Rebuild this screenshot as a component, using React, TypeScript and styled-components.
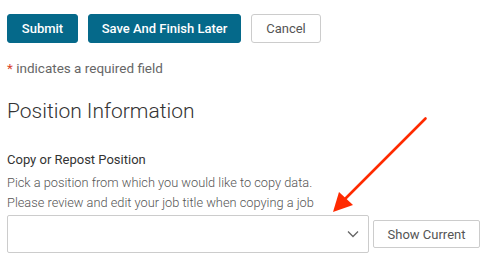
import React from "react";
import styled, { createGlobalStyle } from "styled-components";

const GlobalStyle = createGlobalStyle`
  html, body {
    margin: 0;
    padding: 0;
    background: #fff;
  }
  body {
    font-family: Roboto, "Liberation Sans", sans-serif;
    color: #333;
  }
`;

const Page = styled.div`
  position: relative;
  width: 500px;
  height: 274px;
  overflow: hidden;
  padding: 14px 0 0 7px;
  box-sizing: border-box;
`;

const Toolbar = styled.div`
  display: flex;
  gap: 10px;
`;

const Button = styled.button<{ $primary?: boolean; $width: number }>`
  height: 29px;
  width: ${(p) => p.$width}px;
  border-radius: 3px;
  font-family: Roboto, "Liberation Sans", sans-serif;
  font-size: 13px;
  font-weight: ${(p) => (p.$primary ? 500 : 400)};
  padding: 0;
  cursor: pointer;
  background: ${(p) => (p.$primary ? "#05698a" : "#fff")};
  color: ${(p) => (p.$primary ? "#fff" : "#555")};
  border: 1px solid ${(p) => (p.$primary ? "#05698a" : "#ccc")};
`;

const Required = styled.p`
  margin: 15px 0 0;
  font-size: 13.5px;
  line-height: 20px;
  color: #666;

  span {
    color: #d9432b;
  }
`;

const Heading = styled.h2`
  margin: 18px 0 0;
  font-size: 21px;
  font-weight: 300;
  line-height: 30px;
  color: #333;
`;

const Label = styled.div`
  margin-top: 24px;
  font-size: 13px;
  line-height: 20px;
  color: #333;
`;

const HelpText = styled.div`
  margin-top: 3px;
  font-size: 12.8px;
  font-weight: 300;
  line-height: 19.5px;
  color: #555;
`;

const Row = styled.div`
  display: flex;
  align-items: center;
  gap: 4px;
  margin-top: 3px;
`;

const Select = styled.div`
  width: 362px;
  height: 38px;
  box-sizing: border-box;
  border: 1px solid #ccc;
  border-radius: 2px;
  display: flex;
  align-items: center;
  justify-content: flex-end;
  padding-right: 9px;
`;

const ShowButton = styled.button`
  width: 107px;
  height: 28px;
  background: #fff;
  border: 1px solid #ccc;
  border-radius: 2px;
  font-family: Roboto, "Liberation Sans", sans-serif;
  font-size: 13px;
  color: #555;
  padding: 0;
`;

const Arrow = styled.svg`
  position: absolute;
  left: 0;
  top: 0;
  pointer-events: none;
`;

export default function App() {
  return (
    <Page>
      <GlobalStyle />
      <Toolbar>
        <Button $primary $width={71}>Submit</Button>
        <Button $primary $width={153}>Save And Finish Later</Button>
        <Button $width={70}>Cancel</Button>
      </Toolbar>
      <Required>
        <span>*</span> indicates a required field
      </Required>
      <Heading>Position Information</Heading>
      <Label>Copy or Repost Position</Label>
      <HelpText>
        Pick a position from which you would like to copy data.
        <br />
        Please review and edit your job title when copying a job
      </HelpText>
      <Row>
        <Select>
          <svg width="12" height="8" viewBox="0 0 12 8">
            <path d="M1 1.5 L6 6.5 L11 1.5" fill="none" stroke="#666" strokeWidth="1.3" />
          </svg>
        </Select>
        <ShowButton>Show Current</ShowButton>
      </Row>
      <Arrow width="500" height="274" viewBox="0 0 500 274">
        <line x1="425.5" y1="118.5" x2="345" y2="199" stroke="#ff2a00" strokeWidth="2.6" strokeLinecap="round" />
        <polygon points="333,212 339,192 353,205" fill="#ff2a00" />
      </Arrow>
    </Page>
  );
}
